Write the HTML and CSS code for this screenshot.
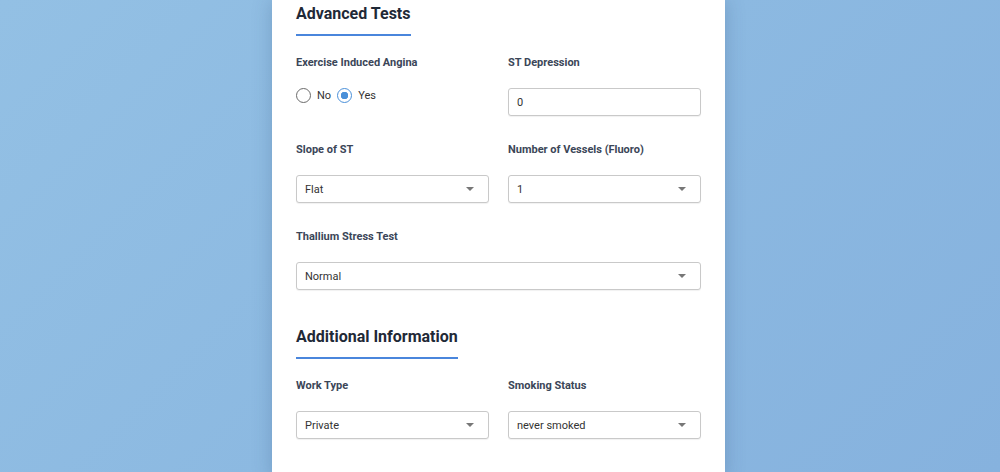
FILE: index.html
```
<!DOCTYPE html>
<html lang="en">

<head>
    <meta charset="UTF-8">
    <meta name="viewport" content="width=device-width, initial-scale=1.0">
    <title>Heart Risk Form</title>
    <link rel="stylesheet" href="styles.css">
</head>

<body>

    <div class="card">
        <section class="section">
            <h2>Advanced Tests</h2>
            <div class="grid">
                <div class="field">
                    <label>Exercise Induced Angina</label>
                    <div class="radios">
                        <label class="radio"><input type="radio" name="exang" value="0"> No</label>
                        <label class="radio"><input type="radio" name="exang" value="1" checked> Yes</label>
                    </div>
                </div>
                <div class="field">
                    <label for="oldpeak">ST Depression</label>
                    <input class="control" type="number" id="oldpeak" value="0">
                </div>
                <div class="field">
                    <label for="slope">Slope of ST</label>
                    <div class="select">
                        <select class="control" id="slope">
                            <option>Upsloping</option>
                            <option selected>Flat</option>
                            <option>Downsloping</option>
                        </select>
                        <svg class="arrow" width="8" height="4" viewBox="0 0 8 4"><path d="M0 0h8L4 4z" /></svg>
                    </div>
                </div>
                <div class="field">
                    <label for="ca">Number of Vessels (Fluoro)</label>
                    <div class="select">
                        <select class="control" id="ca">
                            <option>0</option>
                            <option selected>1</option>
                            <option>2</option>
                            <option>3</option>
                        </select>
                        <svg class="arrow" width="8" height="4" viewBox="0 0 8 4"><path d="M0 0h8L4 4z" /></svg>
                    </div>
                </div>
                <div class="field wide">
                    <label for="thal">Thallium Stress Test</label>
                    <div class="select">
                        <select class="control" id="thal">
                            <option selected>Normal</option>
                            <option>Fixed Defect</option>
                            <option>Reversible Defect</option>
                        </select>
                        <svg class="arrow" width="8" height="4" viewBox="0 0 8 4"><path d="M0 0h8L4 4z" /></svg>
                    </div>
                </div>
            </div>
        </section>

        <section class="section">
            <h2>Additional Information</h2>
            <div class="grid">
                <div class="field">
                    <label for="work">Work Type</label>
                    <div class="select">
                        <select class="control" id="work">
                            <option selected>Private</option>
                            <option>Self-employed</option>
                            <option>Govt_job</option>
                            <option>children</option>
                            <option>Never_worked</option>
                        </select>
                        <svg class="arrow" width="8" height="4" viewBox="0 0 8 4"><path d="M0 0h8L4 4z" /></svg>
                    </div>
                </div>
                <div class="field">
                    <label for="smoking">Smoking Status</label>
                    <div class="select">
                        <select class="control" id="smoking">
                            <option selected>never smoked</option>
                            <option>formerly smoked</option>
                            <option>smokes</option>
                            <option>Unknown</option>
                        </select>
                        <svg class="arrow" width="8" height="4" viewBox="0 0 8 4"><path d="M0 0h8L4 4z" /></svg>
                    </div>
                </div>
            </div>
        </section>
    </div>

</body>

</html>
```

FILE: styles.css
```
body {
    margin: 0;
    height: 100vh;
    overflow: hidden;
    font-family: Roboto, "Liberation Sans", sans-serif;
    background: linear-gradient(135deg, #93c0e4 0%, #8cb9e1 50%, #86b2de 100%);
}

.card {
    width: 453px;
    box-sizing: border-box;
    margin-left: calc(50% - 228px);
    padding: 4px 24px 40px;
    min-height: 100%;
    background-color: #fff;
    box-shadow: 0 0 18px rgba(40, 70, 110, 0.25);
}

.section + .section {
    margin-top: 37px;
}

h2 {
    display: inline-block;
    margin: 0 0 19px;
    padding-bottom: 10px;
    font-size: 16px;
    line-height: 20px;
    font-weight: 700;
    color: #1f2937;
    border-bottom: 2px solid #4a86dc;
}

.grid {
    display: grid;
    grid-template-columns: 1fr 1fr;
    column-gap: 19px;
    row-gap: 26px;
}

.wide {
    grid-column: 1 / span 2;
}

.field > label {
    display: block;
    margin-bottom: 17px;
    font-size: 11px;
    line-height: 16px;
    font-weight: 700;
    color: #3b4658;
}

.radios {
    display: flex;
    gap: 6px;
    margin-top: 1px;
}

.radio {
    display: flex;
    align-items: center;
    gap: 6px;
    font-size: 11px;
    color: #333;
}

.radio input {
    appearance: none;
    margin: 0;
    width: 15px;
    height: 15px;
    border: 1.5px solid #6b6b6b;
    border-radius: 50%;
    box-sizing: border-box;
}

.radio input:checked {
    border-color: #4a90d9;
    background: radial-gradient(circle, #4a90d9 0 3.5px, #fff 4px);
}

.control {
    display: block;
    width: 100%;
    height: 28px;
    box-sizing: border-box;
    margin: 0;
    padding: 0 8px;
    font-family: inherit;
    font-size: 11px;
    color: #333;
    background: #fff;
    border: 1.5px solid #c9c9c9;
    border-radius: 3px;
    box-shadow: 0 1px 1px rgba(0, 0, 0, 0.06);
    appearance: none;
    outline: none;
}

.control::-webkit-inner-spin-button {
    -webkit-appearance: none;
}

.select {
    position: relative;
}

.arrow {
    position: absolute;
    right: 15px;
    top: 12px;
    fill: #777;
    pointer-events: none;
}
```
